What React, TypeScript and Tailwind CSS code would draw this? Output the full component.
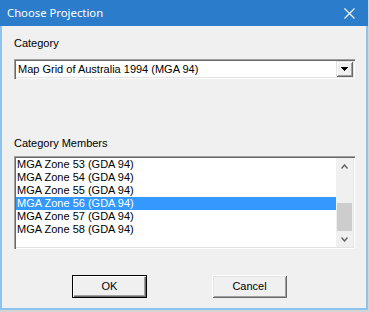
import React from "react";

const items = [
  "MGA Zone 53 (GDA 94)",
  "MGA Zone 54 (GDA 94)",
  "MGA Zone 55 (GDA 94)",
  "MGA Zone 56 (GDA 94)",
  "MGA Zone 57 (GDA 94)",
  "MGA Zone 58 (GDA 94)",
];

export default function App() {
  return (
    <div className="w-[369px] h-[312px] bg-[#d6d6d6] overflow-hidden" style={{ fontFamily: '"Liberation Sans", Arial, sans-serif' }}>
      <div className="w-[368px] h-[310px] flex flex-col border-x-2 border-b-2 border-[#8ec3ee] bg-[#f0f0f0]">
        {/* Title bar */}
        <div className="h-[26px] -mx-[2px] bg-[#2b7ccb] flex items-center justify-between pl-[7px] pr-[13px] shrink-0">
          <span className="text-white text-[11.3px] leading-none" style={{ fontFamily: '"Noto Sans", sans-serif' }}>Choose Projection</span>
          <svg width="11" height="11" viewBox="0 0 11 11">
            <path d="M0.5 0.5 L10.5 10.5 M10.5 0.5 L0.5 10.5" stroke="#ffffff" strokeWidth="1.1" fill="none" />
          </svg>
        </div>
        {/* Client */}
        <div className="flex flex-col pl-[12px] text-[11px] text-black">
          <div className="mt-[10px] h-[14px] leading-[14px]">Category</div>
          <div className="mt-[9px] w-[341px] h-[20px] bg-white flex items-stretch shadow-[inset_1px_1px_0_#a0a0a0,inset_2px_2px_0_#696969,inset_-1px_-1px_0_#ffffff,inset_-2px_-2px_0_#e3e3e3] p-[2px]">
            <div className="flex-1 pl-[2px] leading-[16px]">Map Grid of Australia 1994 (MGA 94)</div>
            <div className="w-[17px] bg-[#f0f0f0] flex items-center justify-center shadow-[inset_1px_1px_0_#e3e3e3,inset_-1px_-1px_0_#696969,inset_2px_2px_0_#ffffff,inset_-2px_-2px_0_#a0a0a0]">
              <svg width="7" height="4" viewBox="0 0 7 4">
                <path d="M0 0 H7 V1 H6 V2 H5 V3 H4 V4 H3 V3 H2 V2 H1 V1 H0 Z" fill="#000" />
              </svg>
            </div>
          </div>
          <div className="mt-[57px] h-[14px] leading-[14px]">Category Members</div>
          <div className="mt-[6px] w-[341px] h-[93px] bg-white flex shadow-[inset_1px_1px_0_#a0a0a0,inset_2px_2px_0_#696969,inset_-1px_-1px_0_#ffffff,inset_-2px_-2px_0_#e3e3e3] p-[2px]">
            <div className="flex-1 flex flex-col">
              {items.map((t, i) => (
                <div
                  key={t}
                  className={
                    i === 3
                      ? "h-[13px] leading-[13px] pl-[1px] bg-[#3399ff] text-white"
                      : "h-[13px] leading-[13px] pl-[1px]"
                  }
                >
                  {t}
                </div>
              ))}
            </div>
            <div className="w-[17px] bg-[#f0f0f0] flex flex-col items-center">
              <div className="h-[17px] w-full flex items-center justify-center">
                <svg width="7" height="5" viewBox="0 0 7 5">
                  <path d="M0.5 4.5 L3.5 1 L6.5 4.5" stroke="#606060" strokeWidth="1.4" fill="none" />
                </svg>
              </div>
              <div className="flex-1 w-full px-[1px] flex flex-col">
                <div className="mt-[29px] h-[28px] bg-[#cdcdcd]" />
              </div>
              <div className="h-[17px] w-full flex items-center justify-center">
                <svg width="7" height="5" viewBox="0 0 7 5">
                  <path d="M0.5 0.5 L3.5 4 L6.5 0.5" stroke="#606060" strokeWidth="1.4" fill="none" />
                </svg>
              </div>
            </div>
          </div>
          <div className="mt-[26px] flex">
            <div className="ml-[58px] w-[75px] h-[23px] flex items-center justify-center bg-[#f0f0f0] shadow-[inset_1px_1px_0_#000,inset_-1px_-1px_0_#000,inset_2px_2px_0_#ffffff,inset_-2px_-2px_0_#696969,inset_-3px_-3px_0_#a0a0a0]">
              OK
            </div>
            <div className="ml-[65px] w-[75px] h-[23px] flex items-center justify-center bg-[#f0f0f0] shadow-[inset_1px_1px_0_#ffffff,inset_-1px_-1px_0_#696969,inset_2px_2px_0_#e3e3e3,inset_-2px_-2px_0_#a0a0a0]">
              Cancel
            </div>
          </div>
        </div>
      </div>
    </div>
  );
}
